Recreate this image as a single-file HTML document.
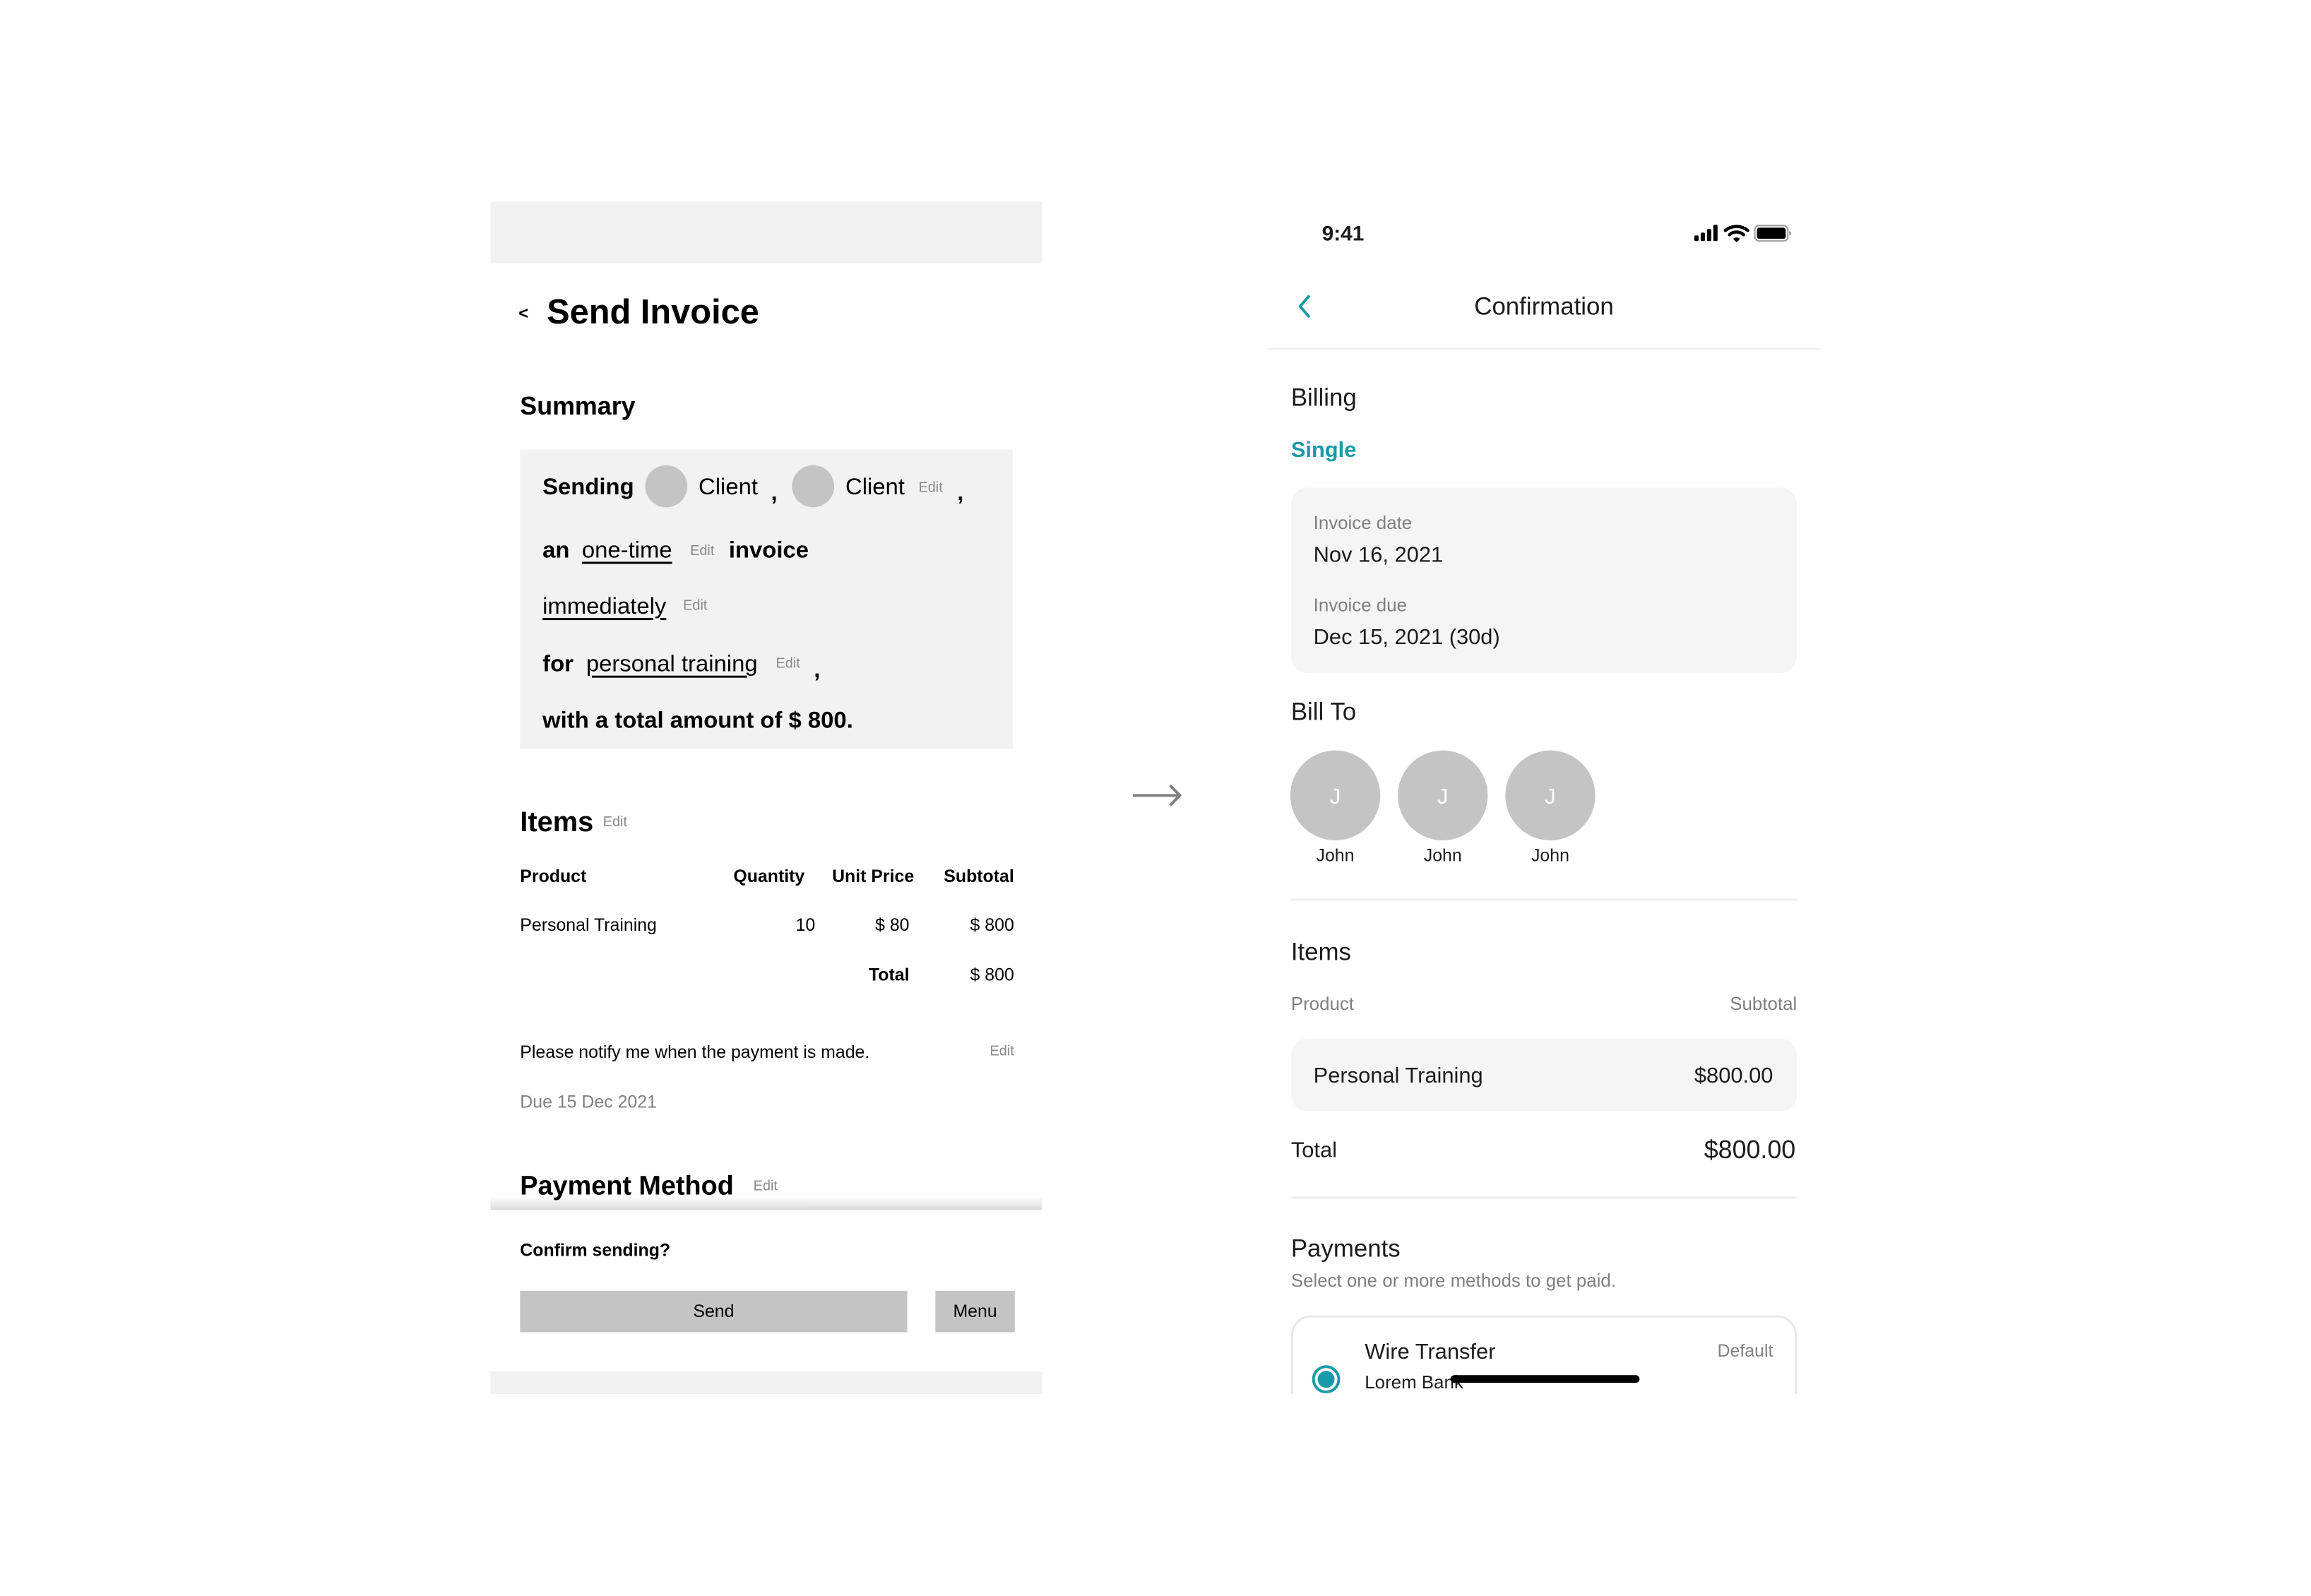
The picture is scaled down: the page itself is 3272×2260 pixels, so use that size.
<!DOCTYPE html>
<html><head><meta charset="utf-8"><style>
*{margin:0;padding:0;box-sizing:border-box}
body{width:3272px;height:2260px;background:#fff;position:relative;overflow:hidden;font-family:"Liberation Sans",sans-serif;color:#000}
#w{position:absolute;left:0;top:0;width:3272px;height:2260px;transform:scale(0.995);transform-origin:0 0}
.a{position:absolute;line-height:1;white-space:nowrap;transform:translateY(-50%)}
.b{font-weight:bold}
.e{color:#888;font-size:20px}
.g{color:#808080}
.r{text-align:right}
.box{position:absolute}
.u{text-decoration:underline;text-underline-offset:6px;text-decoration-thickness:3px}
.t{color:#1c1c1c}
</style></head><body><div id="w">
<!-- LEFT -->
<div class="box" style="left:698px;top:287px;width:785px;height:88px;background:#f2f2f2"></div>
<div class="a b" style="left:738px;top:447px;font-size:24px">&lt;</div>
<div class="a b" style="left:778px;top:445px;font-size:49px">Send Invoice</div>
<div class="a b" style="left:740px;top:578px;font-size:36px">Summary</div>
<div class="box" style="left:740px;top:640px;width:701px;height:426px;background:#f2f2f2"></div>
<div class="box" style="left:918px;top:662px;width:60px;height:60px;border-radius:50%;background:#c4c4c4"></div>
<div class="box" style="left:1127px;top:662px;width:60px;height:60px;border-radius:50%;background:#c4c4c4"></div>
<div class="a b" style="left:772px;top:692px;font-size:33px">Sending</div>
<div class="a" style="left:994px;top:692px;font-size:33px">Client</div>
<div class="a b" style="left:1097px;top:700px;font-size:33px">,</div>
<div class="a" style="left:1203px;top:692px;font-size:33px">Client</div>
<div class="a e" style="left:1307px;top:694px">Edit</div>
<div class="a b" style="left:1362px;top:700px;font-size:33px">,</div>
<div class="a b" style="left:772px;top:782px;font-size:33px">an</div>
<div class="a u" style="left:828px;top:782px;font-size:33px">one-time</div>
<div class="a e" style="left:982px;top:784px">Edit</div>
<div class="a b" style="left:1037px;top:782px;font-size:33px">invoice</div>
<div class="a u" style="left:772px;top:862px;font-size:33px">immediately</div>
<div class="a e" style="left:972px;top:862px">Edit</div>
<div class="a b" style="left:772px;top:944px;font-size:33px">for</div>
<div class="a u" style="left:834px;top:944px;font-size:33px">personal training</div>
<div class="a e" style="left:1104px;top:944px">Edit</div>
<div class="a b" style="left:1158px;top:952px;font-size:33px">,</div>
<div class="a b" style="left:772px;top:1024px;font-size:33px">with a total amount of $ 800.</div>

<div class="a b" style="left:740px;top:1170px;font-size:40px">Items</div>
<div class="a e" style="left:858px;top:1170px">Edit</div>
<div class="a b" style="left:740px;top:1248px;font-size:25px">Product</div>
<div class="a b r" style="right:2127px;top:1248px;font-size:25px">Quantity</div>
<div class="a b" style="left:1184px;top:1248px;font-size:25px">Unit Price</div>
<div class="a b r" style="right:1829px;top:1248px;font-size:25px">Subtotal</div>
<div class="a" style="left:740px;top:1317px;font-size:25px">Personal Training</div>
<div class="a r" style="right:2112px;top:1317px;font-size:25px">10</div>
<div class="a r" style="right:1978px;top:1317px;font-size:25px">$ 80</div>
<div class="a r" style="right:1829px;top:1317px;font-size:25px">$ 800</div>
<div class="a b r" style="right:1978px;top:1388px;font-size:25px">Total</div>
<div class="a r" style="right:1829px;top:1388px;font-size:25px">$ 800</div>
<div class="a" style="left:740px;top:1498px;font-size:25px">Please notify me when the payment is made.</div>
<div class="a e r" style="right:1829px;top:1496px">Edit</div>
<div class="a g" style="left:740px;top:1569px;font-size:25px">Due 15 Dec 2021</div>
<div class="a b" style="left:740px;top:1688px;font-size:38px">Payment Method</div>
<div class="a e" style="left:1072px;top:1688px">Edit</div>
<div class="box" style="left:698px;top:1702px;width:785px;height:20px;background:linear-gradient(rgba(0,0,0,0),rgba(0,0,0,0.14))"></div>
<div class="a b" style="left:740px;top:1780px;font-size:25px">Confirm sending?</div>
<div class="box" style="left:740px;top:1837px;width:551px;height:59px;background:#c4c4c4"></div>
<div class="a" style="left:740px;width:551px;text-align:center;top:1867px;font-size:25px">Send</div>
<div class="box" style="left:1331px;top:1837px;width:113px;height:59px;background:#c4c4c4"></div>
<div class="a" style="left:1331px;width:113px;text-align:center;top:1867px;font-size:25px">Menu</div>
<div class="box" style="left:698px;top:1952px;width:785px;height:32px;background:#f2f2f2"></div>

<!-- ARROW -->
<svg class="box" style="left:1610px;top:1112px" width="80" height="40" viewBox="0 0 80 40"><path d="M4 20H68M56 7L69 20L56 33" fill="none" stroke="#808080" stroke-width="4" stroke-linecap="round" stroke-linejoin="round"/></svg>

<!-- RIGHT -->
<div class="a b t" style="left:1881px;top:333px;font-size:30px">9:41</div>
<svg class="box" style="left:2410px;top:318px" width="140" height="28" viewBox="0 0 140 28">
<rect x="1" y="17" width="6" height="8" rx="1.5"/><rect x="10" y="13" width="6" height="12" rx="1.5"/><rect x="19" y="8" width="6" height="17" rx="1.5"/><rect x="28" y="2" width="6" height="23" rx="1.5"/>
<path d="M45 10A25 25 0 0 1 77 10" fill="none" stroke="#000" stroke-width="4.5" stroke-linecap="round"/>
<path d="M51 16A15 15 0 0 1 71 16" fill="none" stroke="#000" stroke-width="4.5" stroke-linecap="round"/>
<path d="M56 22L61 27L66 22A7 7 0 0 0 56 22Z"/>
<rect x="87" y="3" width="47" height="22" rx="6" fill="none" stroke="#999" stroke-width="2"/>
<rect x="90" y="6" width="41" height="16" rx="3.5"/>
<path d="M136 11V17A3 3 0 0 0 136 11Z" fill="#999"/>
</svg>
<svg class="box" style="left:1842px;top:418px" width="30" height="36" viewBox="0 0 30 36"><path d="M20 4L8 18L20 32" fill="none" stroke="#1a9aa8" stroke-width="4" stroke-linecap="round" stroke-linejoin="round"/></svg>
<div class="a t" style="left:1804px;width:786px;text-align:center;top:436px;font-size:35px">Confirmation</div>
<div class="box" style="left:1804px;top:495px;width:786px;height:3px;background:#f0f0f0"></div>
<div class="a t" style="left:1837px;top:566px;font-size:35px">Billing</div>
<div class="a b" style="left:1837px;top:640px;font-size:31px;color:#1a9aa8">Single</div>
<div class="box" style="left:1837px;top:694px;width:720px;height:264px;background:#f5f5f5;border-radius:24px"></div>
<div class="a g" style="left:1869px;top:744px;font-size:26px">Invoice date</div>
<div class="a t" style="left:1869px;top:789px;font-size:31px">Nov 16, 2021</div>
<div class="a g" style="left:1869px;top:861px;font-size:26px">Invoice due</div>
<div class="a t" style="left:1869px;top:906px;font-size:31px">Dec 15, 2021 (30d)</div>
<div class="a t" style="left:1837px;top:1013px;font-size:35px">Bill To</div>
<div class="box" style="left:1836px;top:1068px;width:128px;height:128px;border-radius:50%;background:#c4c4c4"></div>
<div class="box" style="left:1989px;top:1068px;width:128px;height:128px;border-radius:50%;background:#c4c4c4"></div>
<div class="box" style="left:2142px;top:1068px;width:128px;height:128px;border-radius:50%;background:#c4c4c4"></div>
<div class="a" style="left:1836px;width:128px;text-align:center;top:1133px;font-size:31px;color:#fff">J</div>
<div class="a" style="left:1989px;width:128px;text-align:center;top:1133px;font-size:31px;color:#fff">J</div>
<div class="a" style="left:2142px;width:128px;text-align:center;top:1133px;font-size:31px;color:#fff">J</div>
<div class="a t" style="left:1836px;width:128px;text-align:center;top:1218px;font-size:25px">John</div>
<div class="a t" style="left:1989px;width:128px;text-align:center;top:1218px;font-size:25px">John</div>
<div class="a t" style="left:2142px;width:128px;text-align:center;top:1218px;font-size:25px">John</div>
<div class="box" style="left:1837px;top:1279px;width:720px;height:3px;background:#eee"></div>
<div class="a t" style="left:1837px;top:1355px;font-size:35px">Items</div>
<div class="a g" style="left:1837px;top:1428px;font-size:26px">Product</div>
<div class="a g r" style="right:715px;top:1428px;font-size:26px">Subtotal</div>
<div class="box" style="left:1837px;top:1478px;width:720px;height:103px;background:#f5f5f5;border-radius:24px"></div>
<div class="a t" style="left:1869px;top:1530px;font-size:31px">Personal Training</div>
<div class="a t r" style="right:749px;top:1530px;font-size:31px">$800.00</div>
<div class="a t" style="left:1837px;top:1636px;font-size:31px">Total</div>
<div class="a t r" style="right:717px;top:1636px;font-size:36px">$800.00</div>
<div class="box" style="left:1837px;top:1703px;width:720px;height:3px;background:#eee"></div>
<div class="a t" style="left:1837px;top:1777px;font-size:35px">Payments</div>
<div class="a g" style="left:1837px;top:1822px;font-size:26px">Select one or more methods to get paid.</div>
<div class="box" style="left:1837px;top:1872px;width:720px;height:112px;overflow:hidden"><div style="width:720px;height:200px;border:3px solid #e8e8e8;border-radius:28px"></div></div>
<div class="a t" style="left:1942px;top:1923px;font-size:31px">Wire Transfer</div>
<div class="a g r" style="right:749px;top:1923px;font-size:25px">Default</div>
<div class="box" style="left:1867px;top:1943px;width:40px;height:40px;border-radius:50%;border:4px solid #1a9aa8;padding:4px"><div style="width:100%;height:100%;border-radius:50%;background:#1a9aa8"></div></div>
<div class="a t" style="left:1942px;top:1967px;font-size:26px">Lorem Bank</div>
<div class="box" style="left:2064px;top:1957px;width:269px;height:11px;border-radius:6px;background:#000"></div>
</div></body></html>
